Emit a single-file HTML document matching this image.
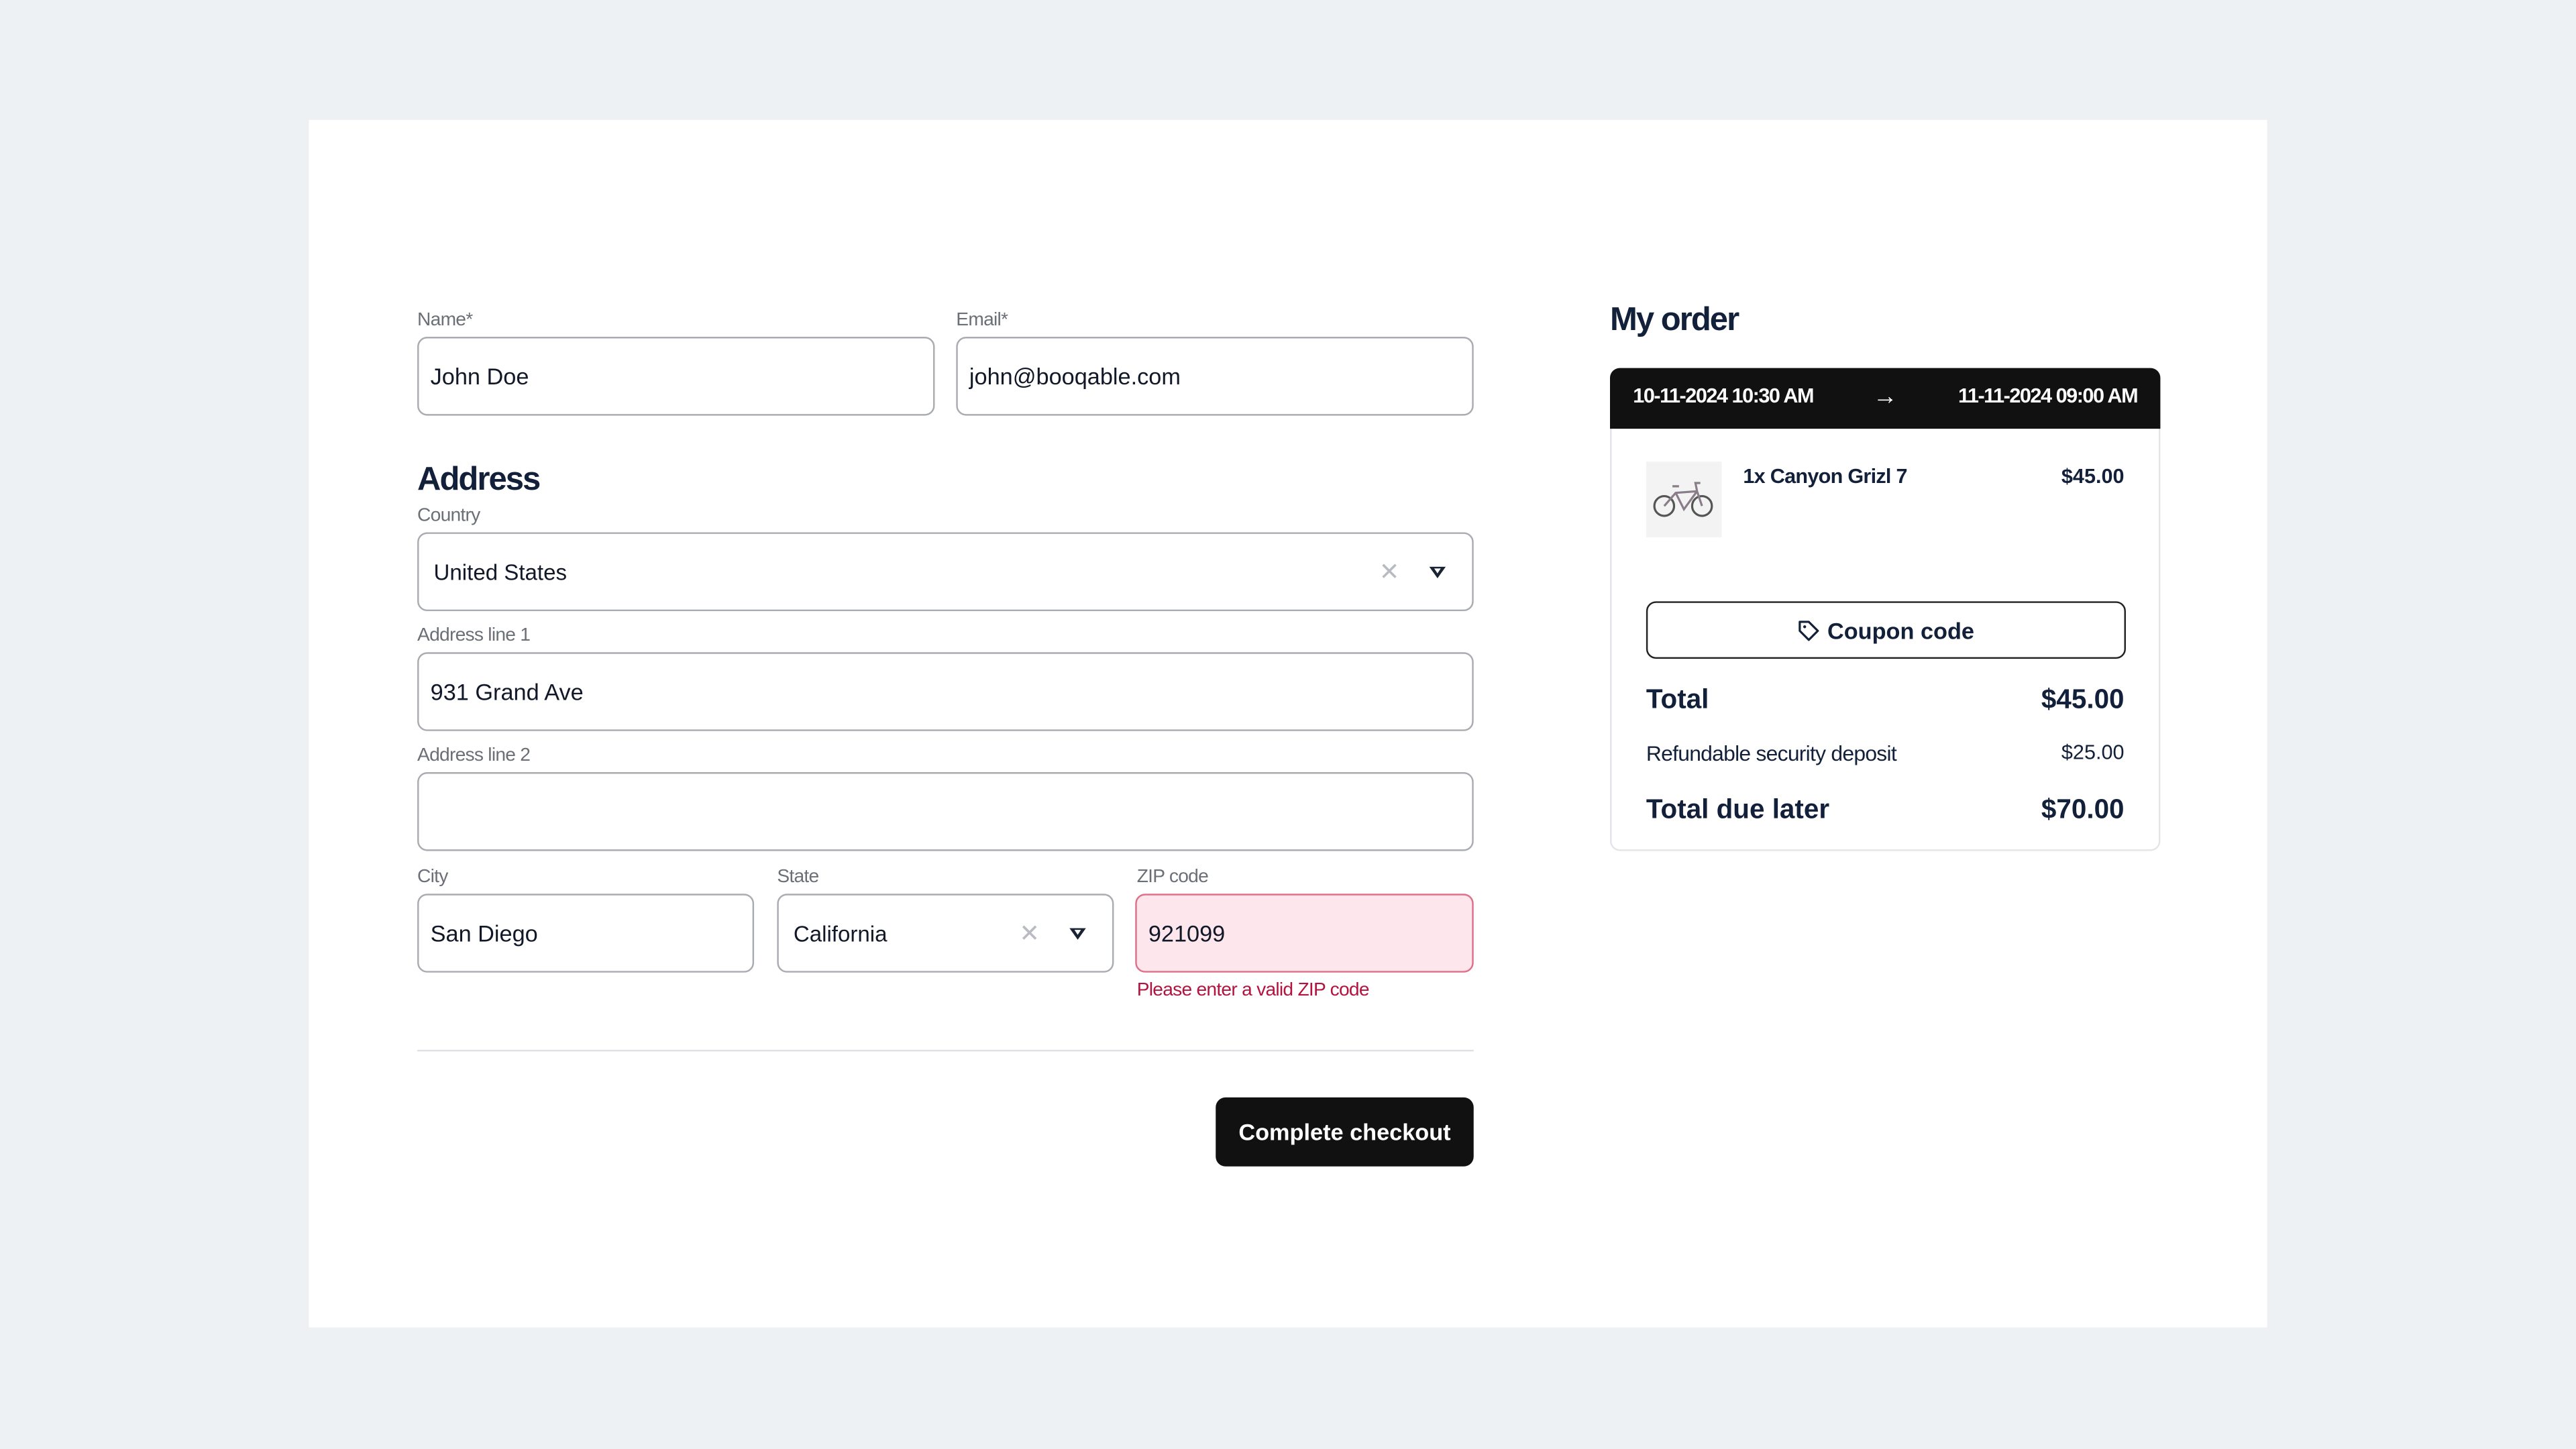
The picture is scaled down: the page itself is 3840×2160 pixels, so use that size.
<!DOCTYPE html>
<html><head><meta charset="utf-8"><style>
html,body{margin:0;padding:0;width:3840px;height:2160px;overflow:hidden;background:#eef1f4}
#w{position:absolute;left:0;top:0;width:1568px;height:882px;transform:scale(2.44898);transform-origin:0 0;font-family:"Liberation Sans",sans-serif;color:#1a2333}
.a{position:absolute}
.card{left:188px;top:73px;width:1192px;height:735px;background:#fff}
.lbl{font-size:11.5px;color:#6b6f76;letter-spacing:-0.3px}
.in{box-sizing:border-box;border:1px solid #a9acb1;border-radius:6px;background:#fff;font-size:14px;color:#111827;padding-left:7px;display:flex;align-items:center;height:48px}
.x{position:absolute;color:#b8bcc2;font-size:15px;top:14px}
.tri{position:absolute;top:20px;width:0;height:0;border-left:5px solid transparent;border-right:5px solid transparent;border-top:7px solid #1a2333}
.tri:after{content:"";position:absolute;left:-2px;top:-6px;border-left:2px solid transparent;border-right:2px solid transparent;border-top:3px solid #fff}
h2{margin:0;font-size:20px;font-weight:bold;color:#13203a;letter-spacing:-0.8px}
</style></head><body><div id="w">
<div class="a card"></div>

<div class="a lbl" style="left:254px;top:189px">Name*</div>
<div class="a in" style="left:254px;top:205px;width:315px">John Doe</div>
<div class="a lbl" style="left:582px;top:189px">Email*</div>
<div class="a in" style="left:582px;top:205px;width:315px">john@booqable.com</div>

<h2 class="a" style="left:254px;top:281px">Address</h2>
<div class="a lbl" style="left:254px;top:308px">Country</div>
<div class="a in" style="left:254px;top:324px;width:643px;padding-left:9px;font-size:13.5px">United States<span class="x" style="right:44px">✕</span><span class="tri" style="right:16px"></span></div>
<div class="a lbl" style="left:254px;top:381px">Address line 1</div>
<div class="a in" style="left:254px;top:397px;width:643px">931 Grand Ave</div>
<div class="a lbl" style="left:254px;top:454px">Address line 2</div>
<div class="a in" style="left:254px;top:470px;width:643px"></div>
<div class="a lbl" style="left:254px;top:528px">City</div>
<div class="a in" style="left:254px;top:544px;width:205px">San Diego</div>
<div class="a lbl" style="left:473px;top:528px">State</div>
<div class="a in" style="left:473px;top:544px;width:205px;padding-left:9px;font-size:13.5px">California<span class="x" style="right:44px">✕</span><span class="tri" style="right:16px"></span></div>
<div class="a lbl" style="left:692px;top:528px">ZIP code</div>
<div class="a in" style="left:691px;top:544px;width:206px;background:#fde7ec;border-color:#e0708a">921099</div>
<div class="a" style="left:692px;top:597px;font-size:11.5px;color:#b3133f;letter-spacing:-0.3px">Please enter a valid ZIP code</div>
<div class="a" style="left:254px;top:639px;width:643px;height:1px;background:#dfe1e4"></div>
<div class="a" style="left:740px;top:668px;width:157px;height:42px;background:#111;border-radius:6px;color:#fff;font-weight:bold;font-size:14px;display:flex;align-items:center;justify-content:center">Complete checkout</div>

<h2 class="a" style="left:980px;top:184px">My order</h2>
<div class="a" style="left:980px;top:224px;width:333px;height:292px;border:1px solid #e3e5e8;border-radius:6px;background:#fff"></div>
<div class="a" style="left:980px;top:224px;width:335px;height:37px;background:#111;border-radius:6px 6px 0 0;color:#fff;font-weight:bold;font-size:12.5px">
 <span class="a" style="left:14px;top:10px;letter-spacing:-0.6px">10-11-2024 10:30 AM</span>
 <span class="a" style="left:160px;top:9px;font-size:15px;font-weight:normal">→</span>
 <span class="a" style="right:14px;top:10px;letter-spacing:-0.6px">11-11-2024 09:00 AM</span>
</div>
<div class="a" style="left:1002px;top:281px;width:46px;height:46px;background:#f3f3f3">
<svg width="46" height="46" viewBox="0 0 46 46"><g fill="none" stroke="#555" stroke-width="1.3"><circle cx="11" cy="27" r="6"/><circle cx="34" cy="27" r="6"/><path d="M11 27 L18 19 L31 18 L34 27 M18 19 L23 29 L31 18 M16 15 L20 15 M31 18 L30 13 L33 13" stroke="#8a7d8a"/></g></svg></div>
<div class="a" style="left:1061px;top:283px;font-size:12.5px;font-weight:bold;color:#13203a;letter-spacing:-0.3px">1x Canyon Grizl 7</div>
<div class="a" style="left:1230px;width:63px;text-align:right;top:283px;font-size:12.5px;font-weight:bold;color:#13203a">$45.00</div>
<div class="a" style="left:1002px;top:366px;width:292px;height:35px;box-sizing:border-box;border:1.5px solid #222;border-radius:6px;display:flex;align-items:center;justify-content:center;font-weight:bold;font-size:14px;color:#13203a">
<svg width="14" height="14" viewBox="0 0 14 14" style="margin-right:4px"><path d="M1.5 1.5 H7 L12.5 7 L7 12.5 L1.5 7 Z" fill="none" stroke="#13203a" stroke-width="1.3" stroke-linejoin="round"/><circle cx="4.5" cy="4.5" r="0.9" fill="#13203a"/></svg>Coupon code</div>
<div class="a" style="left:1002px;top:417px;font-size:16.5px;font-weight:bold;color:#13203a">Total</div>
<div class="a" style="left:1193px;width:100px;text-align:right;top:417px;font-size:16.5px;font-weight:bold;color:#13203a">$45.00</div>
<div class="a" style="left:1002px;top:451px;font-size:13px;color:#13203a;letter-spacing:-0.3px">Refundable security deposit</div>
<div class="a" style="left:1193px;width:100px;text-align:right;top:451px;font-size:12.5px;color:#13203a">$25.00</div>
<div class="a" style="left:1002px;top:484px;font-size:16.5px;font-weight:bold;color:#13203a">Total due later</div>
<div class="a" style="left:1193px;width:100px;text-align:right;top:484px;font-size:16.5px;font-weight:bold;color:#13203a">$70.00</div>
</div></body></html>
